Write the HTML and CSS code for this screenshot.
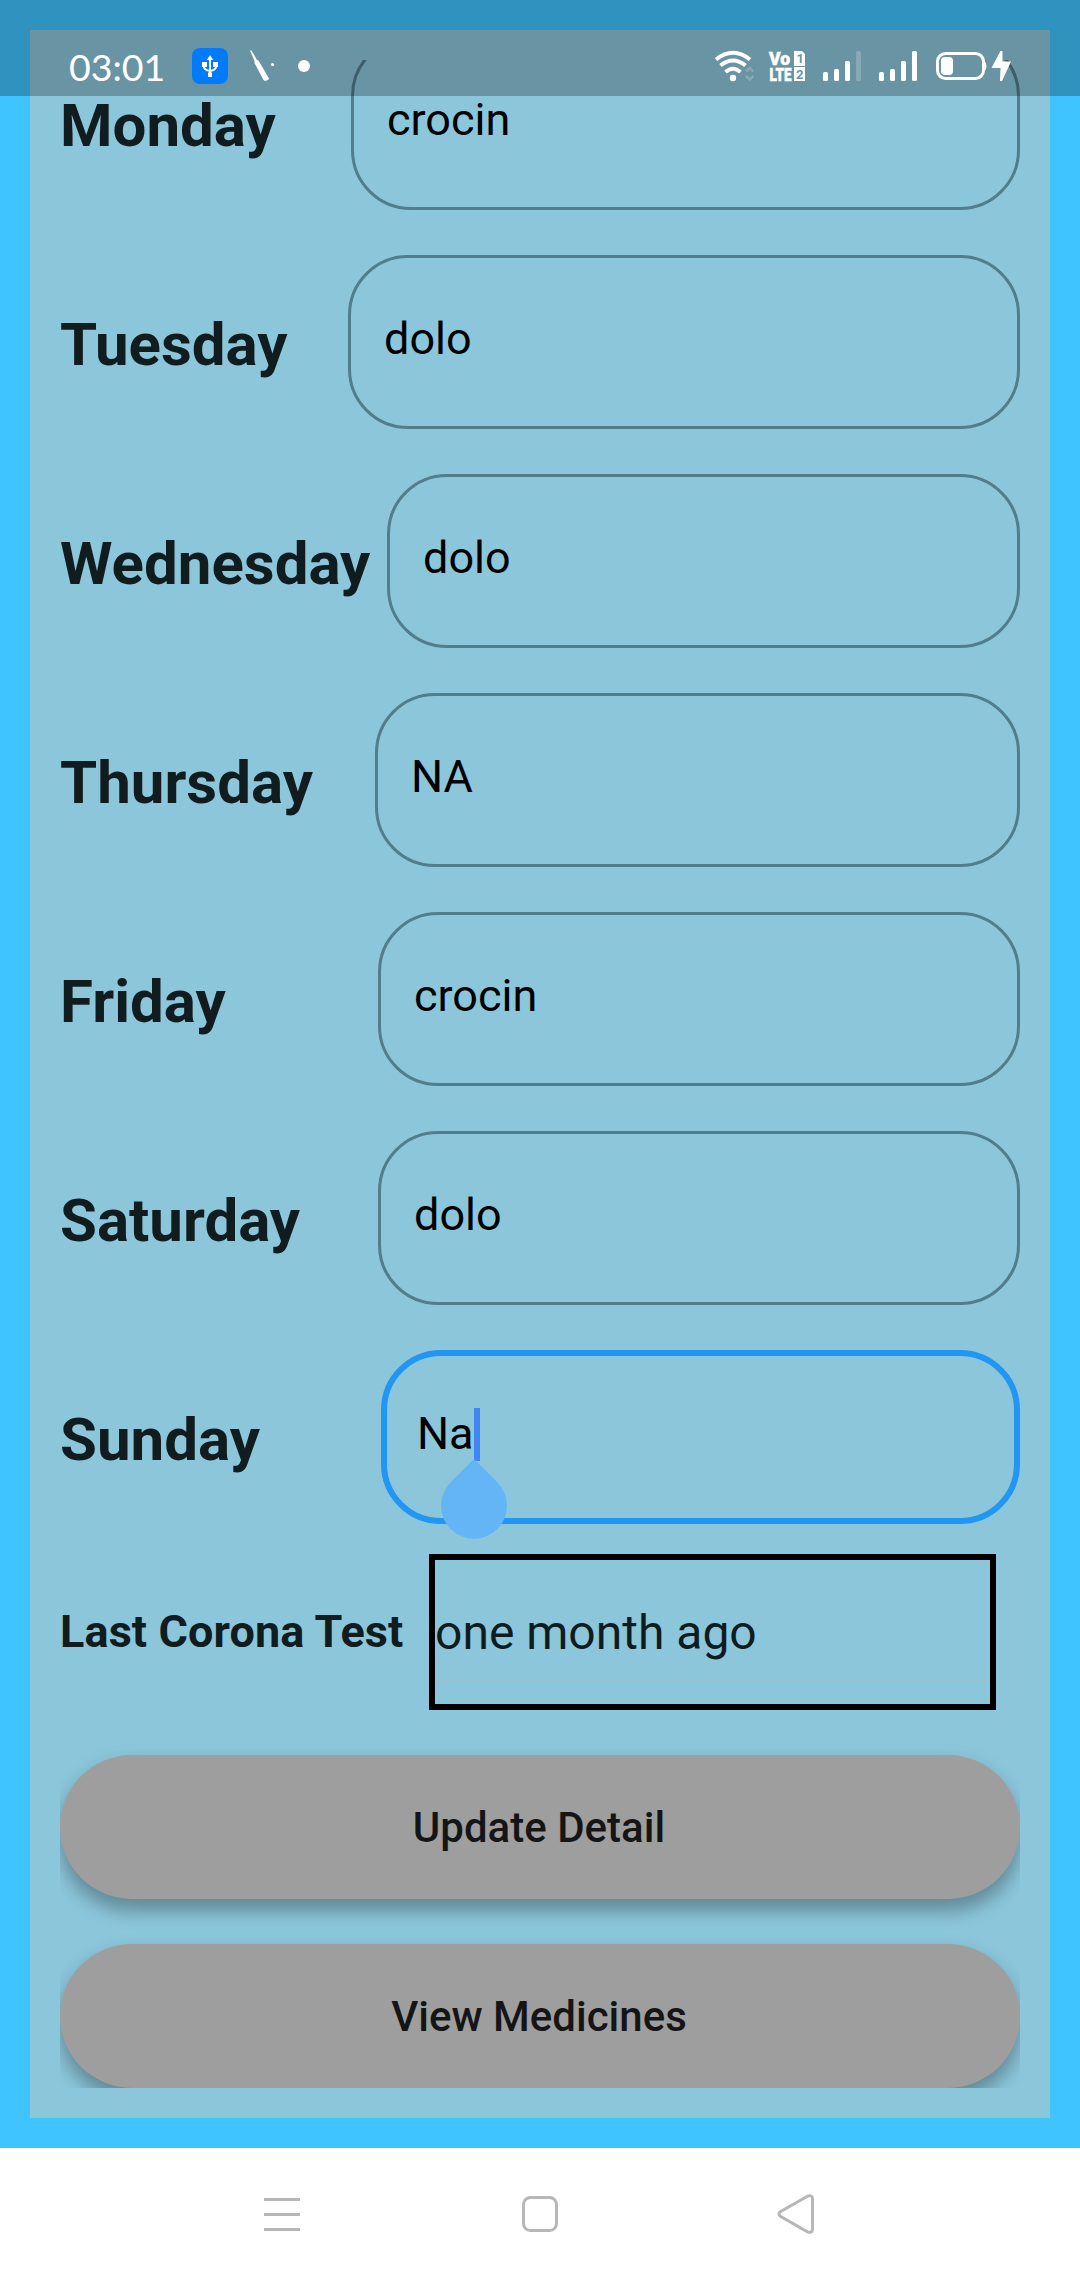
FILE: index.html
```html
<!DOCTYPE html>
<html lang="en">
<head>
<meta charset="utf-8">
<title>Medicine details</title>
<link rel="stylesheet" href="styles.css">
</head>
<body>
<div class="phone">
  <header class="statusbar">
    <span class="clock">03:01</span>
    <svg class="notifications" width="120" height="40" viewBox="0 0 120 40" fill="#fff">
      <rect x="0" y="2" width="36" height="36" rx="8" fill="#007bff"/>
      <g stroke="#fff" stroke-width="2" fill="none"><path d="M18 11v19M12 18v2.500q0 3.500 6 4.500q6-1 6-4.500V18"/></g>
      <path d="M18 9l3.200 5h-6.400zM10 16h5v5h-5zM21 16h5v5h-5zM16 26.500h4v4.500h-4z"/>
      <path d="M58 4.500l1.500 0 5.500 9.500 1.500 0.500 10.500 18-1 1.500-3 1-1.500-1L62.500 17v-2z"/>
      <circle cx="80.500" cy="18.500" r="1.600"/>
      <circle cx="112" cy="20" r="6"/>
    </svg>
    <svg class="system" width="300" height="40" viewBox="0 0 300 40" fill="#fff">
      <g fill="none" stroke="#fff" stroke-width="4">
        <path d="M2 13.500Q19 0 36 13.500M6.500 19.500Q19 9.500 31.500 19.500M11.500 26Q19 19.500 26.500 26"/>
      </g>
      <circle cx="19" cy="32" r="3.200"/>
      <path d="M32 25.500l3.700-3.500 3.700 3.500M32 30l3.700 3.500 3.700-3.500" fill="none" stroke="#fff" stroke-opacity=".2" stroke-width="2.500"/>
      <g class="volte">
        <text x="55" y="19" textLength="21" lengthAdjust="spacingAndGlyphs">Vo</text>
        <text x="55.500" y="35" textLength="22" lengthAdjust="spacingAndGlyphs">LTE</text>
      </g>
      <path d="M80 5h8l3 3v12H80zM80 21h11v14H80z"/>
      <g class="sim"><text x="82.500" y="17">1</text><text x="82" y="33">2</text></g>
      <rect x="109" y="26" width="5" height="9" rx="1.500"/><rect x="120" y="23" width="5" height="12" rx="1.500"/><rect x="131" y="15" width="5" height="20" rx="1.500"/><rect x="142" y="5" width="5" height="30" rx="1.500" opacity=".2"/>
      <rect x="165" y="26" width="5" height="9" rx="1.500"/><rect x="176" y="23" width="5" height="12" rx="1.500"/><rect x="187" y="15" width="5" height="20" rx="1.500"/><rect x="198" y="5" width="5" height="30" rx="1.500"/>
      <rect x="223.500" y="7.500" width="46" height="25" rx="8" fill="none" stroke="#fff" stroke-width="3"/>
      <rect x="227" y="11" width="12" height="18" rx="4"/>
      <path d="M270.500 15q2 2 2 5t-2 5z"/>
      <path d="M286.500 5L277.500 22h9l-.500 13h2L297 15.500h-8.500V5z"/>
    </svg>
  </header>

  <main class="screen">
    <section class="card">
      <div class="form">
        <div class="row monday"><span class="day">Monday</span><div class="field">crocin</div></div>
        <div class="row tuesday"><span class="day">Tuesday</span><div class="field">dolo</div></div>
        <div class="row wednesday"><span class="day">Wednesday</span><div class="field">dolo</div></div>
        <div class="row thursday"><span class="day">Thursday</span><div class="field">NA</div></div>
        <div class="row friday"><span class="day">Friday</span><div class="field">crocin</div></div>
        <div class="row saturday"><span class="day">Saturday</span><div class="field">dolo</div></div>
        <div class="row sunday"><span class="day">Sunday</span>
          <div class="field focused">Na<span class="caret"><svg class="handle" width="66" height="80" viewBox="0 0 66 80"><path d="M33 0L9.700 23.300A33 33 0 1 0 56.300 23.300Z" fill="#64b5f6"/></svg></span></div>
        </div>
        <div class="row test"><span class="test-label">Last Corona Test</span><div class="dropdown"><div class="choice">one month ago</div></div></div>
        <button class="action">Update Detail</button>
        <button class="action">View Medicines</button>
      </div>
    </section>
  </main>

  <nav class="navbar">
    <svg width="40" height="44" viewBox="0 0 40 44" fill="none" stroke="#b7b7b7" stroke-width="3"><path d="M0 7.500h36M0 22.500h36M0 37.500h36"/></svg>
    <svg width="40" height="44" viewBox="0 0 40 44" fill="none" stroke="#b7b7b7" stroke-width="3"><rect x="3.500" y="5.500" width="33" height="33" rx="7"/></svg>
    <svg width="40" height="44" viewBox="0 0 40 44" fill="none" stroke="#b7b7b7" stroke-width="3"><path d="M31.500 4.200L4.300 19.800Q1.500 22 4.300 24.200L31.500 39.800Q36.500 41.500 36.500 37V7Q36.500 2.500 31.500 4.200Z"/></svg>
  </nav>
</div>
</body>
</html>
```
FILE: styles.css
```css
* { box-sizing: border-box; }
body { margin: 0; font-family: Roboto, "Noto Sans", sans-serif; }
.phone { position: relative; width: 1080px; height: 2280px; overflow: hidden; display: flex; flex-direction: column; background: #fff; }

/* translucent bar lies over the scrolled form */
.statusbar { position: absolute; z-index: 2; top: 0; left: 0; width: 1080px; height: 96px; padding: 46px 0 0 69px; display: flex; align-items: flex-start; background: rgba(0, 0, 0, .25); }
.statusbar svg { flex: none; }
.clock { width: 123px; font: 400 37.5px/42px Lato, Roboto, sans-serif; letter-spacing: 0; color: #fff; }
.system { margin-left: auto; margin-right: 66px; }
.volte { font: 900 19px Roboto, sans-serif; stroke: #fff; stroke-width: .5px; }
.sim { font: 700 13px Roboto, sans-serif; fill: #6996a5; }

.screen { height: 2148px; padding: 30px; background: #40c4ff; }
.card { height: 2088px; padding: 30px; background: #8cc6da; }
.form { height: 2028px; overflow: hidden; display: flex; flex-direction: column; justify-content: flex-end; }
.row { flex: none; display: flex; align-items: center; height: 174px; margin-bottom: 45px; }
.day { flex: none; font-size: 60px; font-weight: 700; line-height: 70px; color: #111c1f; padding-top: 6px; }
.monday .day { width: 291px; }
.tuesday .day { width: 288px; }
.wednesday .day { width: 327px; }
.thursday .day { width: 315px; }
.friday .day, .saturday .day { width: 318px; }
.sunday .day { width: 321px; }
.field { flex: 1; height: 174px; padding: 54px 33px; border: 3px solid #527d8b; border-radius: 60px; font-size: 45px; line-height: 53px; color: #000; }
.field.focused { border: 6px solid #2196f3; padding: 51px 30px; }

.caret { display: inline-block; position: relative; width: 6px; height: 53px; top: 1px; vertical-align: top; background: #4285f4; }
.handle { position: absolute; z-index: 1; left: -33px; top: 51px; }

.row.sunday { margin-bottom: 30px; }
.row.test { height: 156px; }
.test-label { width: 369px; flex: none; padding-bottom: 2px; font-size: 45px; font-weight: 700; line-height: 53px; letter-spacing: .1px; color: #111c1f; }
.dropdown { width: 567px; height: 156px; border: 6px solid #000; padding-top: 45px; }
.choice { height: 76px; border-bottom: 2px solid #98c2cd; font-size: 48px; line-height: 56px; color: #0f1c1f; }

.action { flex: none; height: 144px; margin: 0 0 45px; padding: 2px 2px 0 0; border: 0; border-radius: 72px; background: #9e9e9e; color: #151515; font: 500 42px/50px Roboto, sans-serif; box-shadow: 0 12px 18px rgba(0, 0, 0, .27), 0 6px 24px rgba(0, 0, 0, .06); }
.action:last-child { margin-bottom: 0; }

.navbar { flex: 1; display: flex; justify-content: center; gap: 216px; padding-top: 44px; }
```
